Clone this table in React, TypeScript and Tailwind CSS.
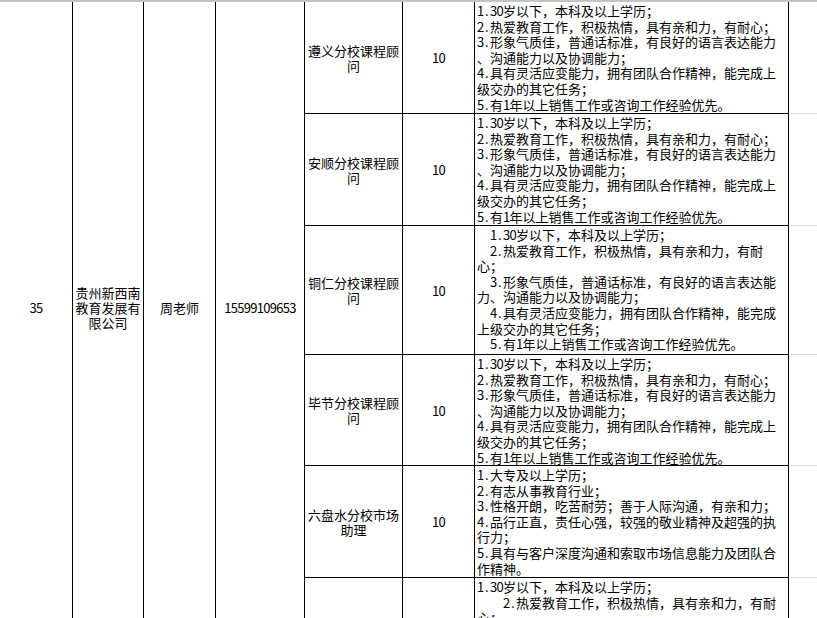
import React from 'react';

type Row = {
  h: string;
  title: string[];
  count: string;
  lines: { text: string; indent?: string }[];
};

const standard = [
  { text: '1.30岁以下，本科及以上学历；' },
  { text: '2.热爱教育工作，积极热情，具有亲和力，有耐心；' },
  { text: '3.形象气质佳，普通话标准，有良好的语言表达能力' },
  { text: '、沟通能力以及协调能力；' },
  { text: '4.具有灵活应变能力，拥有团队合作精神，能完成上' },
  { text: '级交办的其它任务；' },
  { text: '5.有1年以上销售工作或咨询工作经验优先。' },
];

const rows: Row[] = [
  { h: 'h-[112px]', title: ['遵义分校课程顾', '问'], count: '10', lines: standard },
  { h: 'h-[112px]', title: ['安顺分校课程顾', '问'], count: '10', lines: standard },
  {
    h: 'h-[129px]',
    title: ['铜仁分校课程顾', '问'],
    count: '10',
    lines: [
      { text: '1.30岁以下，本科及以上学历；', indent: 'pl-[13px]' },
      { text: '2.热爱教育工作，积极热情，具有亲和力，有耐', indent: 'pl-[13px]' },
      { text: '心；' },
      { text: '3.形象气质佳，普通话标准，有良好的语言表达能', indent: 'pl-[13px]' },
      { text: '力、沟通能力以及协调能力；' },
      { text: '4.具有灵活应变能力，拥有团队合作精神，能完成', indent: 'pl-[13px]' },
      { text: '上级交办的其它任务；' },
      { text: '5.有1年以上销售工作或咨询工作经验优先。', indent: 'pl-[13px]' },
    ],
  },
  { h: 'h-[111px]', title: ['毕节分校课程顾', '问'], count: '10', lines: standard },
  {
    h: 'h-[112px]',
    title: ['六盘水分校市场', '助理'],
    count: '10',
    lines: [
      { text: '1.大专及以上学历；' },
      { text: '2.有志从事教育行业；' },
      { text: '3.性格开朗，吃苦耐劳；善于人际沟通，有亲和力；' },
      { text: '4.品行正直，责任心强，较强的敬业精神及超强的执' },
      { text: '行力；' },
      { text: '5.具有与客户深度沟通和索取市场信息能力及团队合' },
      { text: '作精神。' },
    ],
  },
  {
    h: 'flex-1',
    title: [],
    count: '',
    lines: [
      { text: '1.30岁以下，本科及以上学历；' },
      { text: '2.热爱教育工作，积极热情，具有亲和力，有耐', indent: 'pl-[26px]' },
      { text: '心；' },
    ],
  },
];

// half-width characters get a fixed 6.5px cell, like the sheet's font
function Cells({ text }: { text: string }) {
  const parts = text.split(/([\x21-\x7e])/).filter(Boolean);
  return (
    <>
      {parts.map((p, i) =>
        /^[\x21-\x7e]$/.test(p) ? (
          <span key={i} className="inline-block w-[6.5px] text-center">{p}</span>
        ) : (
          <React.Fragment key={i}>{p}</React.Fragment>
        )
      )}
    </>
  );
}

function Stack({ lines }: { lines: string[] }) {
  return (
    <div className="flex flex-col items-center leading-[15px]">
      {lines.map((l, i) => (
        <div key={i} className="whitespace-nowrap"><Cells text={l} /></div>
      ))}
    </div>
  );
}

export default function App() {
  return (
    <div className="w-[817px] h-[618px] overflow-hidden bg-white text-black text-[13px] font-['Noto_Sans_CJK_SC',sans-serif] border-t-2 border-[#c4c4c4] flex">
      <div className="w-[73px] border-r border-black flex items-center justify-center pb-[6px]">
        <Stack lines={['35']} />
      </div>
      <div className="w-[71px] border-r border-black flex items-center justify-center pb-[6px]">
        <Stack lines={['贵州新西南', '教育发展有', '限公司']} />
      </div>
      <div className="w-[72px] border-r border-black flex items-center justify-center pb-[6px]">
        <Stack lines={['周老师']} />
      </div>
      <div className="w-[89px] border-r border-black flex items-center justify-center pb-[6px]">
        <Stack lines={['15599109653']} />
      </div>
      <div className="flex-1 flex flex-col">
        {rows.map((r, i) => (
          <div key={i} className={`${r.h} flex shrink-0`}>
            <div className="w-[98px] border-r border-b border-black flex items-center justify-center">
              <Stack lines={r.title} />
            </div>
            <div className="w-[72px] border-r border-b border-black flex items-center justify-center">
              <Stack lines={r.count ? [r.count] : []} />
            </div>
            <div className="w-[314px] border-r border-b border-black overflow-hidden pl-[2px] pt-[1px] leading-[15.6px]">
              {r.lines.map((l, j) => (
                <div key={j} className={`whitespace-nowrap ${l.indent ?? ''}`}><Cells text={l.text} /></div>
              ))}
            </div>
            <div className="flex-1 border-b border-[#d4d4d4]" />
          </div>
        ))}
      </div>
    </div>
  );
}
